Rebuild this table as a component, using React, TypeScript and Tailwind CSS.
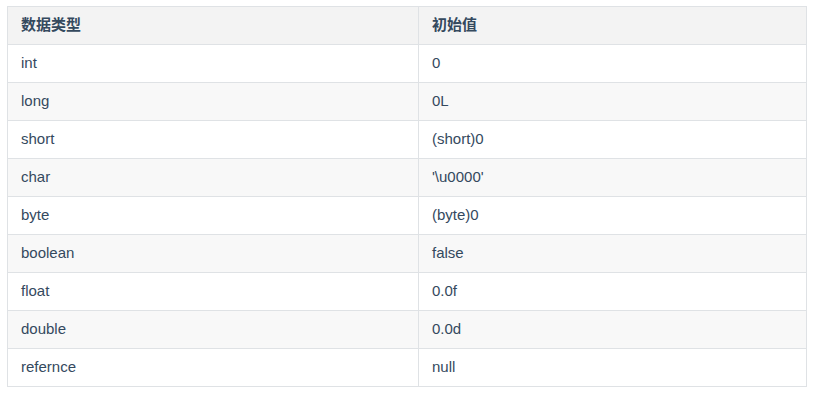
const rows = [
  ["int", "0"],
  ["long", "0L"],
  ["short", "(short)0"],
  ["char", "'\\u0000'"],
  ["byte", "(byte)0"],
  ["boolean", "false"],
  ["float", "0.0f"],
  ["double", "0.0d"],
  ["refernce", "null"],
];

export default function App() {
  return (
    <div className="min-h-[395px] w-[813px] bg-white pl-[7px] pt-[6px] font-['Helvetica_Neue','Liberation_Sans','Noto_Sans_CJK_SC',sans-serif] text-[15px] text-[#34495e]">
      <table className="w-[800px] table-fixed border-collapse border border-[#dfe2e5]">
        <colgroup>
          <col className="w-[411px]" />
          <col />
        </colgroup>
        <thead>
          <tr className="h-[38px] bg-[#f3f3f3]">
            <th className="border border-[#dfe2e5] px-[13px] text-left font-bold">数据类型</th>
            <th className="border border-[#dfe2e5] px-[13px] text-left font-bold">初始值</th>
          </tr>
        </thead>
        <tbody>
          {rows.map(([type, value], i) => (
            <tr key={type} className={i % 2 === 1 ? "h-[38px] bg-[#f8f8f8]" : "h-[38px] bg-white"}>
              <td className="border border-[#dfe2e5] px-[13px]">{type}</td>
              <td className="border border-[#dfe2e5] px-[13px]">{value}</td>
            </tr>
          ))}
        </tbody>
      </table>
    </div>
  );
}
